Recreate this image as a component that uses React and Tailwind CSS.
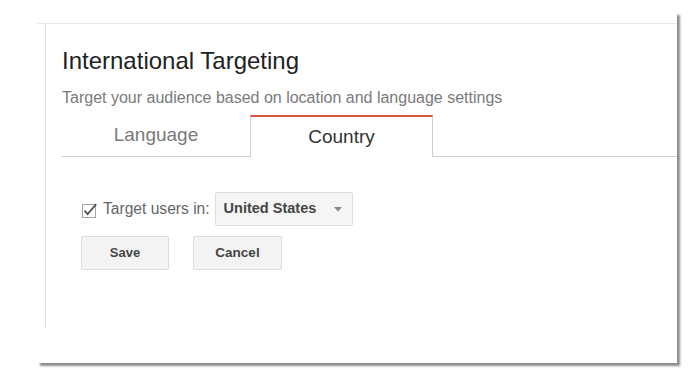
export default function App() {
  return (
    <div
      className="w-[692px] h-[382px] bg-white pt-[12px] pl-[37px] overflow-hidden"
      style={{ fontFamily: '"Liberation Sans", Arial, sans-serif' }}
    >
      {/* Sheet */}
      <div className="w-[640px] h-[351px] pt-[11px] bg-white shadow-[3px_3px_2px_rgba(0,0,0,0.45)]">
        <div className="border-t border-[#e8e8e8]">
          <div className="ml-[8px] h-[304px] border-l border-[#e2e2e2] pl-[16px] pt-[23px]">
            {/* Heading */}
            <h1 className="text-[24px] leading-[28px] text-[#222]">International Targeting</h1>
            <p className="mt-[13px] text-[16px] leading-[20px] text-[#7a7a7a]">
              Target your audience based on location and language settings
            </p>

            {/* Tabs */}
            <div className="mt-[7px] flex items-end">
              <div className="w-[188px] h-[42px] border-b border-[#cfcfcf] flex items-center justify-center pb-[1px] text-[19px] text-[#7a7a7a]">
                Language
              </div>
              <div className="w-[183px] h-[42px] border-t-2 border-l border-r border-t-[#d9553f] border-l-[#cfcfcf] border-r-[#cfcfcf] flex items-center justify-center text-[19px] text-[#333]">
                Country
              </div>
              <div className="flex-1 h-[42px] border-b border-[#cfcfcf]" />
            </div>

            {/* Country setting */}
            <div className="mt-[35px] ml-[20px] flex items-center h-[34px]">
              <svg width="16" height="17" viewBox="0 0 16 17" className="mt-[1px]">
                <rect x="0.5" y="3.5" width="13" height="13" fill="#fff" stroke="#a3a3a3" />
                <path d="M2.6 9.6 L5.6 13.2 L14.2 3.2" fill="none" stroke="#555" strokeWidth="1.8" />
              </svg>
              <span className="ml-[5px] text-[15.6px] text-[#666]">Target users in:</span>
              <div className="ml-[5px] w-[138px] h-[34px] border border-[#dedede] bg-[#f5f5f5] rounded-[2px] flex items-center justify-between pl-[8px] pr-[10px]">
                <span className="text-[14.5px] font-bold text-[#444]">United States</span>
                <svg width="8" height="5" viewBox="0 0 8 5">
                  <path d="M0 0 H8 L4 4.5 Z" fill="#888" />
                </svg>
              </div>
            </div>

            {/* Actions */}
            <div className="mt-[10px] ml-[19px] flex gap-[24px]">
              <button className="w-[88px] h-[34px] border border-[#dcdcdc] bg-[#f3f3f3] rounded-[2px] text-[13px] font-bold text-[#444]">
                Save
              </button>
              <button className="w-[89px] h-[34px] border border-[#dcdcdc] bg-[#f3f3f3] rounded-[2px] text-[13.5px] font-bold text-[#444]">
                Cancel
              </button>
            </div>
          </div>
        </div>
      </div>
    </div>
  );
}
